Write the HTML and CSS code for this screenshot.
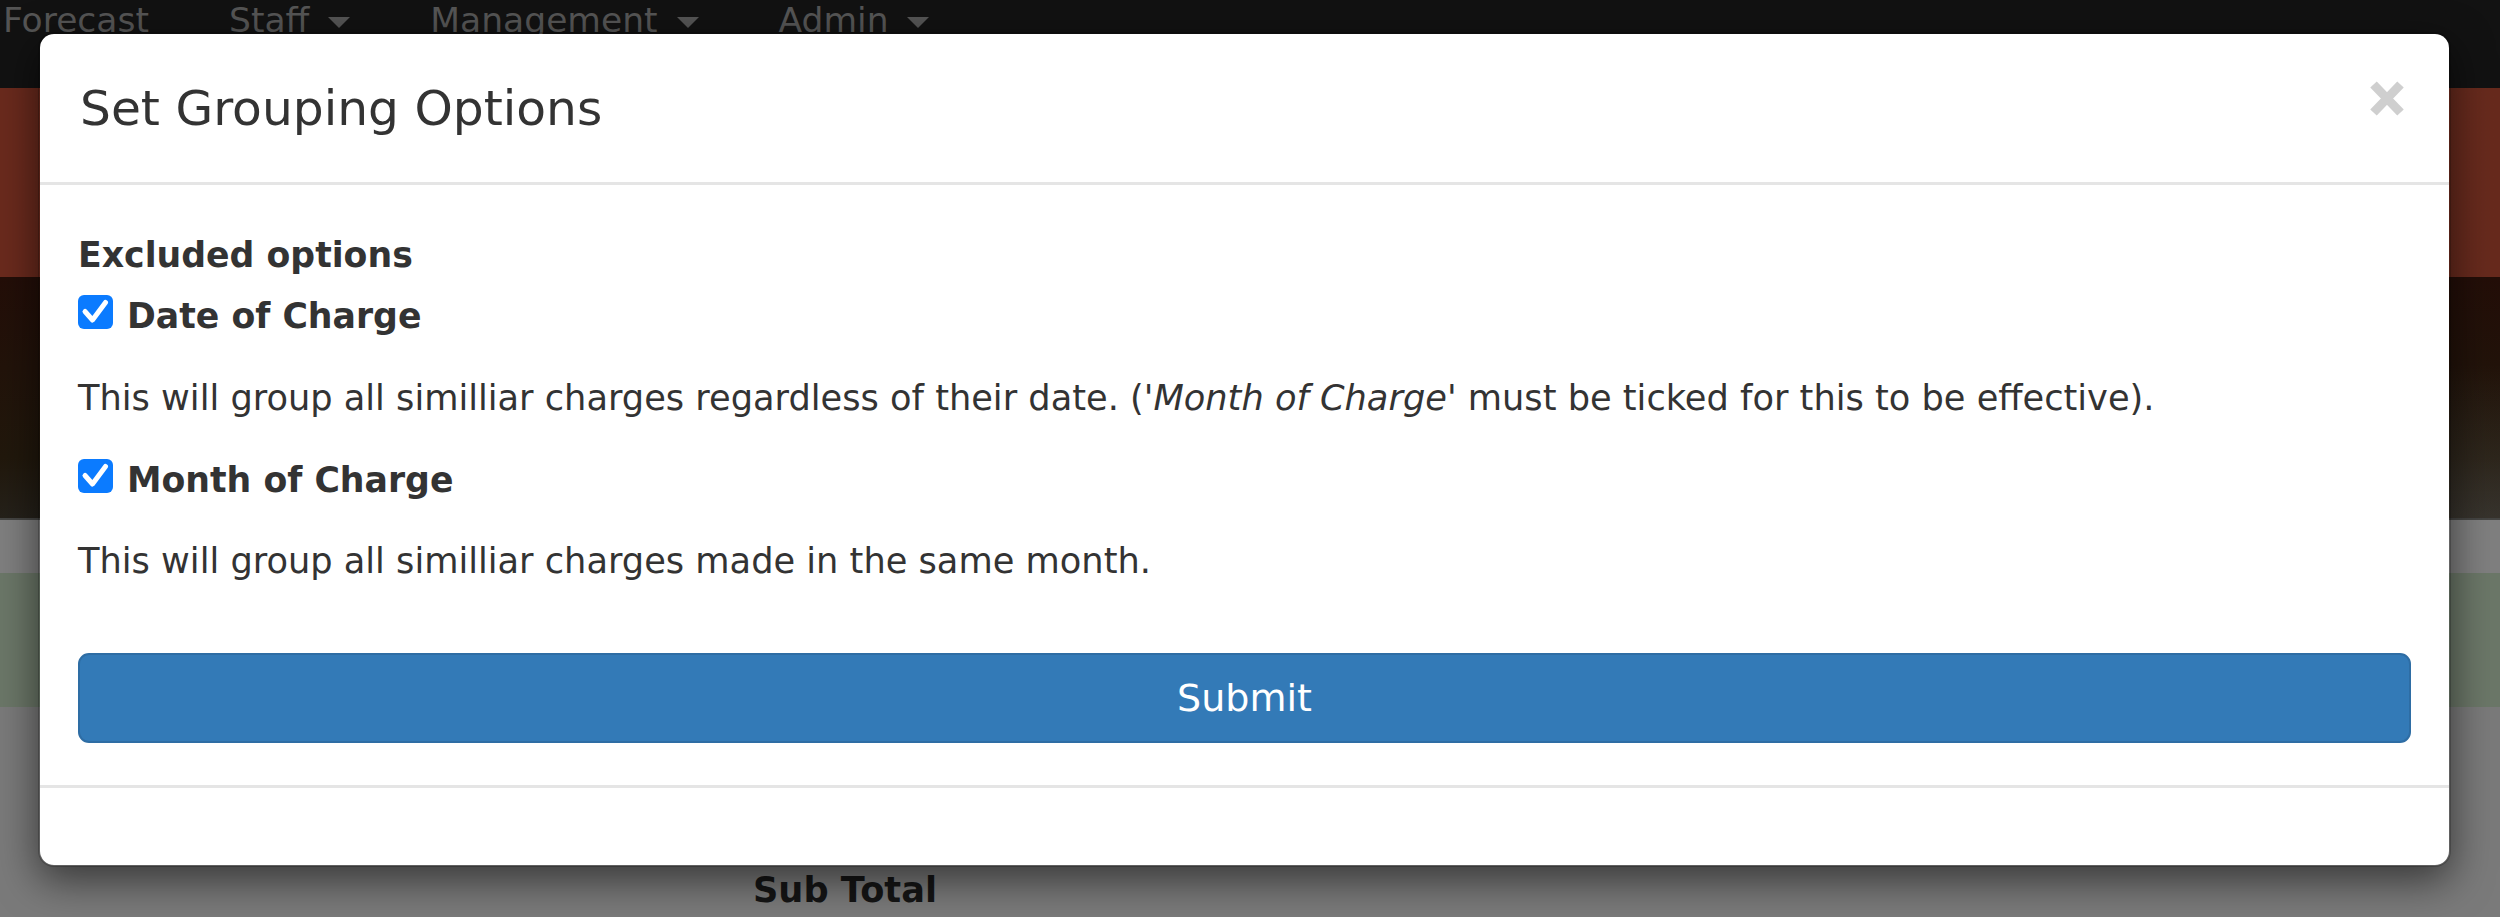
FILE: index.html
```html
<!DOCTYPE html>
<html lang="en">

<head>
    <meta charset="UTF-8">
    <meta name="viewport" content="width=device-width, initial-scale=1.0">
    <title>Set Grouping Options</title>

    <link rel="stylesheet" href="styles.css">
</head>

<body>
    <div class="page">
        <nav class="navbar">
            <ul class="nav">
                <li>Forecast</li>
                <li>Staff <span class="caret"></span></li>
                <li>Management <span class="caret"></span></li>
                <li>Admin <span class="caret"></span></li>
            </ul>
        </nav>
        <div class="band hero"></div>
        <div class="band dark"></div>
        <div class="band strip"></div>
        <div class="band notice"></div>
        <div class="band table-head">
            <span class="sub-total">Sub Total</span>
        </div>
    </div>

    <div class="modal">
        <div class="modal-content">
            <div class="modal-header">
                <h4 class="modal-title">Set Grouping Options</h4>
                <button class="close" type="button" aria-label="Close">
                    <svg width="34" height="35" viewBox="0 0 34 35">
                        <path d="M3.5 3.5 L30.5 31.5 M30.5 3.5 L3.5 31.5" stroke="#cfcfcf" stroke-width="9" fill="none" />
                    </svg>
                </button>
            </div>

            <form class="modal-body">
                <label class="group-label">Excluded options</label>

                <label class="check-row first">
                    <span class="tick">
                        <svg width="35" height="34" viewBox="0 0 35 34">
                            <path d="M7 16.5 L14.5 25 L27.5 7.5" stroke="#fff" stroke-width="5" fill="none" stroke-linecap="round" stroke-linejoin="round" />
                        </svg>
                    </span>
                    <span>Date of Charge</span>
                </label>
                <p class="help first">This will group all similliar charges regardless of their date. (<em>'Month of Charge'</em> must be ticked for this to be effective).</p>

                <label class="check-row second">
                    <span class="tick">
                        <svg width="35" height="34" viewBox="0 0 35 34">
                            <path d="M7 16.5 L14.5 25 L27.5 7.5" stroke="#fff" stroke-width="5" fill="none" stroke-linecap="round" stroke-linejoin="round" />
                        </svg>
                    </span>
                    <span>Month of Charge</span>
                </label>
                <p class="help second">This will group all similliar charges made in the same month.</p>

                <button class="btn-submit" type="button">Submit</button>
            </form>

            <div class="modal-footer"></div>
        </div>
    </div>
</body>

</html>
```

FILE: styles.css
```css
body {
    margin: 0;
    font-family: "DejaVu Sans", Verdana, sans-serif;
    font-size: 35.2px;
    color: #333333;
    overflow: hidden;
}

/* page behind the backdrop, colours already dimmed */
.page {
    width: 2500px;
    height: 917px;
    background-color: #7a7a7a;
}

.navbar {
    height: 88px;
    background-color: #121212;
    overflow: hidden;
}

.nav {
    display: flex;
    margin: 0 0 0 -37px;
    padding: 0;
    list-style: none;
    font-size: 34.5px;
    line-height: 40px;
    color: #555555;
}

.nav li {
    padding: 0 40px;
    white-space: nowrap;
}

.caret {
    display: inline-block;
    width: 0;
    height: 0;
    margin-left: 8px;
    vertical-align: middle;
    border-top: 11px solid #555555;
    border-left: 11px solid transparent;
    border-right: 11px solid transparent;
}

.band.hero {
    height: 189px;
    background: linear-gradient(to right, #6a2a1d, #6b2c1f 60%, #672a1d);
}

.band.dark {
    height: 241px;
    background:
        radial-gradient(ellipse at 100% 100%, rgba(70, 66, 60, 0.55), transparent 45%),
        linear-gradient(to bottom, #230e08, #21180c 75%, #25211a);
}

.band.strip {
    height: 53px;
    border-top: 2px solid #454543;
    background-color: #7f7f7f;
}

.band.notice {
    height: 134px;
    background-color: #6b7768;
}

.band.table-head {
    height: 210px;
    padding: 156px 0 0 753px;
    box-sizing: border-box;
    line-height: 53px;
}

.sub-total {
    font-weight: bold;
    color: #151515;
}

/* modal */
.modal {
    position: absolute;
    top: 32px;
    left: 38px;
    width: 2413px;
}

.modal-content {
    background-color: #ffffff;
    background-clip: padding-box;
    border: 2px solid rgba(0, 0, 0, 0.2);
    border-radius: 16px;
    box-shadow: 0 13px 40px rgba(0, 0, 0, 0.55);
}

.modal-header {
    display: flex;
    justify-content: space-between;
    align-items: flex-start;
    padding: 40px;
    border-bottom: 3px solid #e5e5e5;
}

.modal-title {
    margin: 0;
    font-size: 48.7px;
    font-weight: normal;
    line-height: 68px;
    color: #333333;
}

.close {
    margin: 7px 5px 0 0;
    padding: 0;
    border: 0;
    background: none;
    line-height: 0;
}

.modal-body {
    display: flex;
    flex-direction: column;
    margin: 0;
    padding: 44px 38px 42px;
    line-height: 53px;
}

.group-label {
    font-size: 34.7px;
    font-weight: bold;
}

.check-row {
    display: flex;
    align-items: flex-start;
    gap: 14px;
    font-size: 34.7px;
    font-weight: bold;
}

.check-row.first {
    margin-top: 8px;
}

.check-row.second {
    margin-top: 30px;
}

.tick {
    flex: none;
    width: 35px;
    height: 34px;
    margin-top: 5px;
    border-radius: 6px;
    background-color: #0b7bff;
    line-height: 0;
}

.help {
    margin: 0;
}

.help.first {
    margin-top: 28px;
}

.help.second {
    margin-top: 27px;
}

.btn-submit {
    height: 90px;
    margin-top: 66px;
    border: 2px solid #2e6da4;
    border-radius: 11px;
    background-color: #337ab7;
    color: #ffffff;
    font-family: inherit;
    font-size: 38px;
}

.modal-footer {
    padding: 38px 40px 39px;
    border-top: 3px solid #e5e5e5;
}
```
